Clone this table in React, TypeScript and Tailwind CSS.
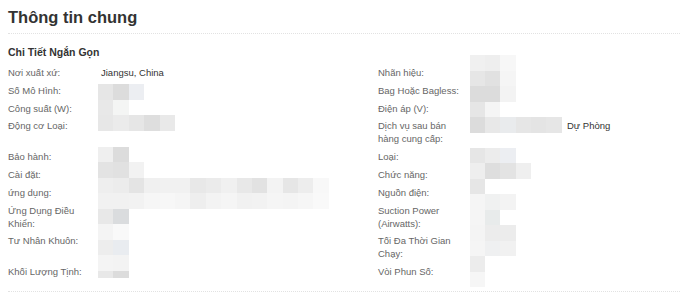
type Row = {
  label: string;
  value?: React.ReactNode;
};

type MosaicRow = {
  h?: string;
  cells: string[];
};

const rows: [Row, Row][] = [
  [{ label: "Nơi xuất xứ:", value: "Jiangsu, China" }, { label: "Nhãn hiệu:" }],
  [{ label: "Số Mô Hình:" }, { label: "Bag Hoặc Bagless:" }],
  [{ label: "Công suất (W):" }, { label: "Điện áp (V):" }],
  [
    { label: "Động cơ Loại:" },
    {
      label: "Dịch vụ sau bán hàng cung cấp:",
      value: (
        <>
          <span className="inline-block w-[96px]" />
          Dự Phòng
        </>
      ),
    },
  ],
  [{ label: "Bảo hành:" }, { label: "Loại:" }],
  [{ label: "Cài đặt:" }, { label: "Chức năng:" }],
  [{ label: "ứng dụng:" }, { label: "Nguồn điện:" }],
  [{ label: "Ứng Dụng Điều Khiển:" }, { label: "Suction Power (Airwatts):" }],
  [{ label: "Tư Nhân Khuôn:" }, { label: "Tối Đa Thời Gian Chạy:" }],
  [{ label: "Khối Lượng Tịnh:" }, { label: "Vòi Phun Số:" }],
];

// pixelated redaction over the hidden values
const leftTop: MosaicRow[] = [
  { cells: ["bg-[#e6e6e6]", "bg-[#dcdcdc]", "bg-[#eceef2]"] },
  { cells: ["bg-[#e8e8e8]", "bg-[#f4f5f4]"] },
  { cells: ["bg-[#e7e7e7]", "bg-[#ebebeb]", "bg-[#e6e6e6]", "bg-[#dedede]", "bg-[#e9e9e9]"] },
];

const leftBottom: MosaicRow[] = [
  { cells: ["bg-[#efefef]", "bg-[#dcdcdc]"] },
  { cells: ["bg-[#e3e3e3]", "bg-[#e1e1e1]", "bg-[#f2f2f2]"] },
  {
    cells: [
      "bg-[#eeeeee]", "bg-[#ececec]", "bg-[#e4e4e4]", "bg-[#f0f0f0]", "bg-[#f1f1f1]",
      "bg-[#f1f1f1]", "bg-[#e8e8e8]", "bg-[#ebebeb]", "bg-[#f0f0f0]", "bg-[#e8e8e8]",
      "bg-[#e2e2e2]", "bg-[#f3f3f3]", "bg-[#e6e6e6]", "bg-[#ededed]", "bg-[#f8f8f8]",
    ],
  },
  {
    cells: [
      "bg-[#f1f1f1]", "bg-[#f1f1f1]", "bg-[#f2f2f2]", "bg-[#f6f6f6]", "bg-[#f7f7f7]",
      "bg-[#f5f5f5]", "bg-[#eeeeee]", "bg-[#f3f3f3]", "bg-[#f5f5f5]", "bg-[#f1f1f1]",
      "bg-[#f2f2f2]", "bg-[#f5f5f5]", "bg-[#f4f4f4]", "bg-[#f6f6f6]", "bg-[#f9f9f9]",
    ],
  },
  { cells: ["bg-[#e8e8e8]", "bg-[#dadcde]"] },
  { cells: ["bg-[#f4f4f4]", "bg-[#f9f9f9]"] },
  { cells: ["bg-[#ededed]", "bg-[#e9ecf0]"] },
  { cells: ["bg-[#f4f4f4]", "bg-[#f3f3f3]"] },
  { h: "h-[7px]", cells: ["bg-[#e8e8e8]", "bg-[#dcdcdc]"] },
];

const rightTop: MosaicRow[] = [
  { cells: ["bg-[#f0f0f0]", "bg-[#eeeeee]", "bg-[#f7f7f7]"] },
  { cells: ["bg-[#e6e6e6]", "bg-[#e1e1e1]", "bg-[#f5f5f5]"] },
  { cells: ["bg-[#dcdcdc]", "bg-[#dcdcdc]", "bg-[#f3f3f3]"] },
  { cells: ["bg-[#e6e6e6]", "bg-[#f5f5f5]"] },
  { cells: ["bg-[#dcdcdc]", "bg-[#e8e8e8]", "bg-[#e9ebed]", "bg-[#e6e6e6]", "bg-[#e4e4e4]", "bg-[#e6e6e6]"] },
];

const rightBottom: MosaicRow[] = [
  { cells: ["bg-[#e6e6e6]", "bg-[#ececec]", "bg-[#eceef2]"] },
  { cells: ["bg-[#eeeeee]", "bg-[#dedede]", "bg-[#e3e3e3]", "bg-[#efefef]"] },
  { cells: ["bg-[#e6e6e6]"] },
  { cells: ["bg-[#f5f5f5]", "bg-[#f0f1f1]", "bg-[#f3f3f3]"] },
  { cells: ["bg-[#f5f5f5]", "bg-[#e8ebeb]"] },
  { cells: ["bg-[#f4f4f4]", "bg-[#ececec]", "bg-[#ececec]"] },
  { cells: ["bg-[#f5f5f5]", "bg-[#eff0f1]", "bg-[#f1f1f1]"] },
  { cells: ["bg-[#ececec]"] },
  { cells: ["bg-[#f6f6f6]"] },
];

function Mosaic({ rows, className }: { rows: MosaicRow[]; className: string }) {
  return (
    <div className={`absolute flex flex-col ${className}`}>
      {rows.map((row, i) => (
        <div key={i} className={`flex ${row.h ?? "h-[15.5px]"}`}>
          {row.cells.map((c, j) => (
            <div key={j} className={`h-full w-[15.4px] ${c}`} />
          ))}
        </div>
      ))}
    </div>
  );
}

function Cell({ row }: { row: Row }) {
  return (
    <div className="flex items-start py-[2.4px] text-[9.5px] leading-[13px]">
      <div className="w-[92px] shrink-0 pr-[8px] text-[#666]">{row.label}</div>
      <div className="pl-[1px] text-[#333]">{row.value}</div>
    </div>
  );
}

export default function App() {
  return (
    <div className="relative h-[294px] w-[680px] overflow-hidden bg-white font-['Liberation_Sans',Arial,sans-serif]">
      <div className="pl-2">
        <h2 className="pt-[7px] text-[16.5px] font-bold leading-[20px] text-[#333]">Thông tin chung</h2>
        <div className="mt-[6px] border-t border-dotted border-[#e2e2e2]" />
        <h3 className="mt-[12px] text-[10.5px] font-bold leading-[13px] text-[#333]">Chi Tiết Ngắn Gọn</h3>
        <div className="mt-[4.7px] grid grid-cols-[370px_1fr]">
          {rows.map(([left, right], i) => (
            <div key={i} className="contents">
              <Cell row={left} />
              <Cell row={right} />
            </div>
          ))}
        </div>
        <div className="mt-[10px] border-t border-dotted border-[#e2e2e2]" />
      </div>

      <Mosaic rows={leftTop} className="left-[98px] top-[84px]" />
      <Mosaic rows={leftBottom} className="left-[98px] top-[146.5px]" />
      <Mosaic rows={rightTop} className="left-[469.5px] top-[55px]" />
      <Mosaic rows={rightBottom} className="left-[469.5px] top-[147.7px]" />
    </div>
  );
}
